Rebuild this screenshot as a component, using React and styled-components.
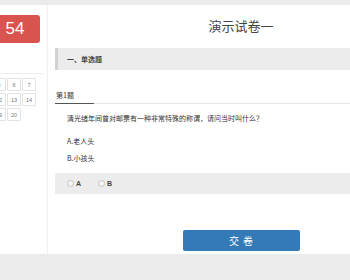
import React from "react";
import styled, { createGlobalStyle } from "styled-components";

const Global = createGlobalStyle`
  html, body { margin: 0; padding: 0; background: #fff; overflow: hidden; }
  body { font-family: "Noto Sans CJK SC", "Noto Sans", sans-serif; color: #333; }
`;

const Page = styled.div`
  width: 350px;
  height: 280px;
  overflow: hidden;
  display: flex;
  flex-direction: column;
`;

const Band = styled.div`
  height: ${(p) => p.$h}px;
  flex-shrink: 0;
  background: #ebebeb;
`;

const Body = styled.div`
  flex: 1;
  display: flex;
  min-height: 0;
`;

const Sidebar = styled.aside`
  width: 47px;
  flex-shrink: 0;
  border-right: 1px solid #f0f0f0;
  overflow: hidden;
  display: flex;
  flex-direction: column;
  align-items: flex-end;
  padding-top: 10px;
`;

const Timer = styled.div`
  width: 50px;
  height: 28px;
  flex-shrink: 0;
  margin-right: 7px;
  background: #d9534f;
  border-radius: 3px;
  color: #fff;
  font-family: "Liberation Sans", Arial, sans-serif;
  font-size: 17px;
  display: flex;
  align-items: center;
  justify-content: center;
`;

const Divider = styled.div`
  width: 100px;
  flex-shrink: 0;
  margin-right: 4px;
  height: 30px;
  border-bottom: 1px solid #eee;
`;

const Grid = styled.div`
  margin-top: 4px;
  margin-right: 11px;
  display: grid;
  grid-template-columns: repeat(7, 14px);
  grid-auto-rows: 13px;
  gap: 2px 1px;
  flex-shrink: 0;
`;

const Cell = styled.div`
  border: 1px solid #e2e2e2;
  border-radius: 1px;
  box-sizing: border-box;
  font-family: "Liberation Sans", Arial, sans-serif;
  font-size: 5.5px;
  color: #777;
  display: flex;
  align-items: center;
  justify-content: center;
`;

const Main = styled.main`
  width: 372px;
  flex-shrink: 0;
  padding-left: 7px;
  display: flex;
  flex-direction: column;
`;

const Title = styled.h1`
  margin: 0;
  height: 43px;
  box-sizing: border-box;
  padding-bottom: 3px;
  display: flex;
  align-items: center;
  justify-content: center;
  font-size: 13px;
  font-weight: 400;
  color: #444;
`;

const Section = styled.div`
  height: 22px;
  background: #ececec;
  border-left: 3px solid #d2d2d2;
  padding-left: 9px;
  display: flex;
  align-items: center;
  font-size: 7px;
  font-weight: 700;
  color: #444;
`;

const Tabs = styled.div`
  margin-top: 20px;
  display: flex;
  border-bottom: 1px solid #e6e6e6;
`;

const Tab = styled.div`
  width: 38px;
  padding: 0 0 3px 1px;
  margin-bottom: -1px;
  border-bottom: 1px solid #555;
  font-size: 7px;
  color: #333;
`;

const Content = styled.div`
  padding-left: 12px;
  font-size: 7px;
  color: #333;
`;

const Question = styled.p`
  margin: 9px 0 0;
  line-height: 10px;
`;

const Option = styled.p`
  margin: ${(p) => p.$mt}px 0 0;
  line-height: 10px;
`;

const Answers = styled.div`
  margin-top: 10px;
  height: 21px;
  background: #ececec;
  padding-left: 12px;
  display: flex;
  align-items: center;
  gap: 17px;
`;

const Choice = styled.label`
  display: flex;
  align-items: center;
  gap: 2px;
  font-family: "Liberation Sans", Arial, sans-serif;
  font-size: 7px;
  font-weight: 700;
  color: #444;
`;

const Radio = styled.span`
  width: 5px;
  height: 5px;
  border-radius: 50%;
  border: 1px solid #c4c4c4;
  background: #f4f4f4;
`;

const Footer = styled.div`
  flex: 1;
  display: flex;
  align-items: flex-end;
  justify-content: center;
  padding-bottom: 3px;
`;

const Submit = styled.button`
  width: 117px;
  height: 21px;
  border: none;
  border-radius: 2px;
  background: #337ab7;
  color: #fff;
  font-family: "Noto Sans CJK SC", sans-serif;
  font-size: 10px;
  letter-spacing: 4px;
  padding: 0 0 0 4px;
`;

const nums = Array.from({ length: 20 }, (_, i) => i + 1);

export default function App() {
  return (
    <Page>
      <Global />
      <Band $h={5} />
      <Body>
        <Sidebar>
          <Timer>54</Timer>
          <Divider />
          <Grid>
            {nums.map((n) => (
              <Cell key={n}>{n}</Cell>
            ))}
          </Grid>
        </Sidebar>
        <Main>
          <Title>演示试卷一</Title>
          <Section>一、单选题</Section>
          <Tabs>
            <Tab>第1题</Tab>
          </Tabs>
          <Content>
            <Question>清光绪年间曾对邮票有一种非常特殊的称谓，请问当时叫什么？</Question>
            <Option $mt={13}>A.老人头</Option>
            <Option $mt={7}>B.小孩头</Option>
          </Content>
          <Answers>
            <Choice><Radio />A</Choice>
            <Choice><Radio />B</Choice>
          </Answers>
          <Footer>
            <Submit>交卷</Submit>
          </Footer>
        </Main>
      </Body>
      <Band $h={26} />
    </Page>
  );
}
